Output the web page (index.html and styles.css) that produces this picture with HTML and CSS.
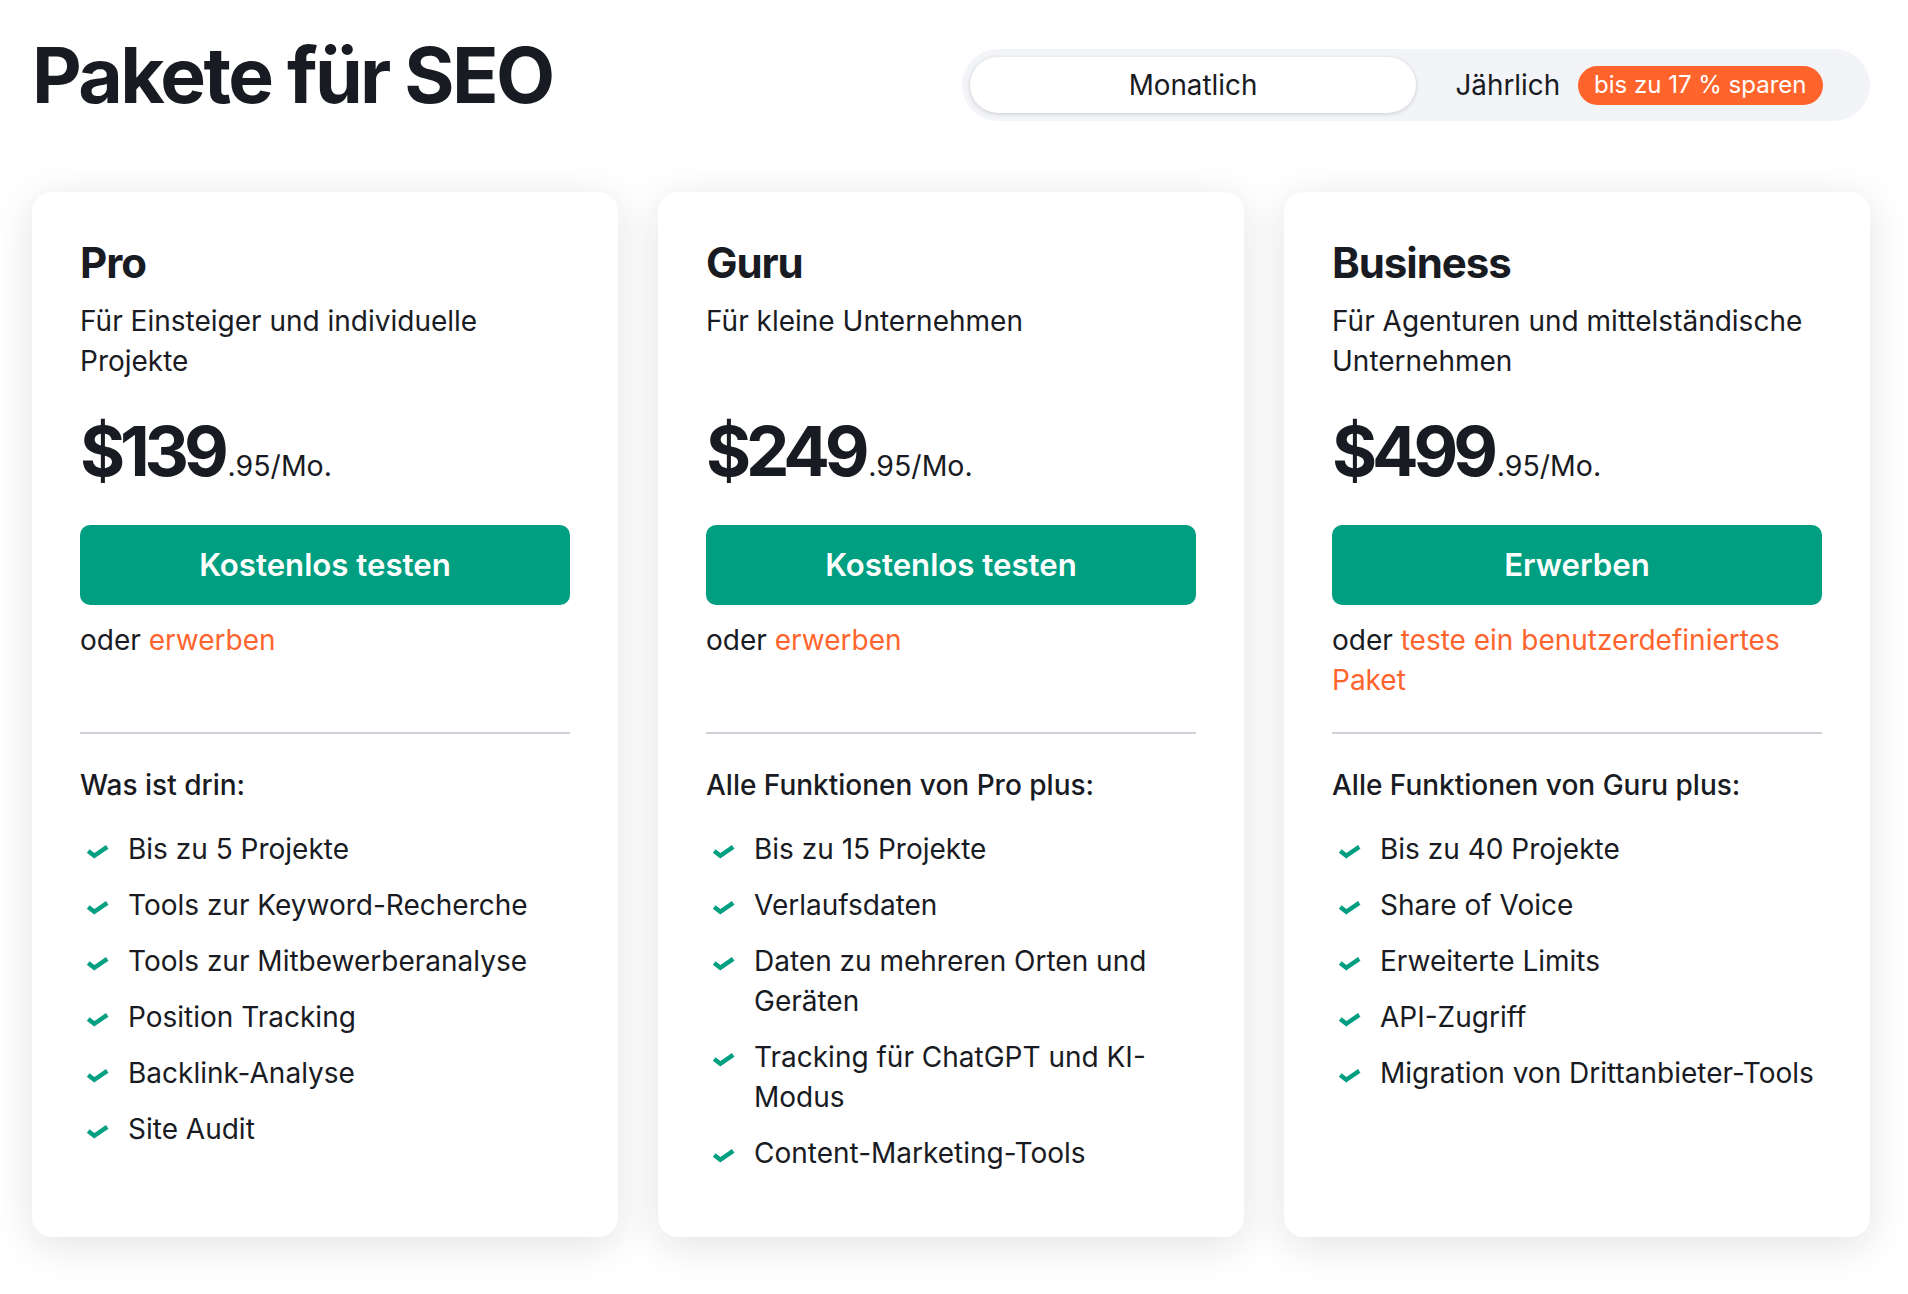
FILE: index.html
```html
<!DOCTYPE html>
<html lang="de">
<head>
<meta charset="utf-8">
<title>Pakete für SEO</title>
<link rel="stylesheet" href="styles.css">
</head>
<body>
<main class="page">
  <header class="header">
    <h1 class="title">Pakete für SEO</h1>
    <div class="toggle">
      <div class="toggle-option is-active">Monatlich</div>
      <div class="toggle-option">Jährlich <span class="badge">bis zu 17 % sparen</span></div>
    </div>
  </header>

  <section class="plans">
    <article class="plan">
      <h2 class="plan-name">Pro</h2>
      <p class="plan-desc">Für Einsteiger und individuelle Projekte</p>
      <div class="price"><span class="price-main">$139</span><span class="price-sub">.95/Mo.</span></div>
      <a class="cta" href="#">Kostenlos testen</a>
      <p class="alt">oder <a href="#">erwerben</a></p>
      <hr class="divider">
      <h3 class="features-title">Was ist drin:</h3>
      <ul class="features">
        <li class="feature"><svg class="feature-icon" viewBox="0 0 33 40"><path d="M8.2 22 L14.3 26.8 L27.2 17.9"/></svg><span>Bis zu 5 Projekte</span></li>
        <li class="feature"><svg class="feature-icon" viewBox="0 0 33 40"><path d="M8.2 22 L14.3 26.8 L27.2 17.9"/></svg><span>Tools zur Keyword-Recherche</span></li>
        <li class="feature"><svg class="feature-icon" viewBox="0 0 33 40"><path d="M8.2 22 L14.3 26.8 L27.2 17.9"/></svg><span>Tools zur Mitbewerberanalyse</span></li>
        <li class="feature"><svg class="feature-icon" viewBox="0 0 33 40"><path d="M8.2 22 L14.3 26.8 L27.2 17.9"/></svg><span>Position Tracking</span></li>
        <li class="feature"><svg class="feature-icon" viewBox="0 0 33 40"><path d="M8.2 22 L14.3 26.8 L27.2 17.9"/></svg><span>Backlink-Analyse</span></li>
        <li class="feature"><svg class="feature-icon" viewBox="0 0 33 40"><path d="M8.2 22 L14.3 26.8 L27.2 17.9"/></svg><span>Site Audit</span></li>
      </ul>
    </article>

    <article class="plan">
      <h2 class="plan-name">Guru</h2>
      <p class="plan-desc">Für kleine Unternehmen</p>
      <div class="price"><span class="price-main">$249</span><span class="price-sub">.95/Mo.</span></div>
      <a class="cta" href="#">Kostenlos testen</a>
      <p class="alt">oder <a href="#">erwerben</a></p>
      <hr class="divider">
      <h3 class="features-title">Alle Funktionen von Pro plus:</h3>
      <ul class="features">
        <li class="feature"><svg class="feature-icon" viewBox="0 0 33 40"><path d="M8.2 22 L14.3 26.8 L27.2 17.9"/></svg><span>Bis zu 15 Projekte</span></li>
        <li class="feature"><svg class="feature-icon" viewBox="0 0 33 40"><path d="M8.2 22 L14.3 26.8 L27.2 17.9"/></svg><span>Verlaufsdaten</span></li>
        <li class="feature"><svg class="feature-icon" viewBox="0 0 33 40"><path d="M8.2 22 L14.3 26.8 L27.2 17.9"/></svg><span>Daten zu mehreren Orten und Geräten</span></li>
        <li class="feature"><svg class="feature-icon" viewBox="0 0 33 40"><path d="M8.2 22 L14.3 26.8 L27.2 17.9"/></svg><span>Tracking für ChatGPT und KI-Modus</span></li>
        <li class="feature"><svg class="feature-icon" viewBox="0 0 33 40"><path d="M8.2 22 L14.3 26.8 L27.2 17.9"/></svg><span>Content-Marketing-Tools</span></li>
      </ul>
    </article>

    <article class="plan">
      <h2 class="plan-name">Business</h2>
      <p class="plan-desc">Für Agenturen und mittelständische Unternehmen</p>
      <div class="price"><span class="price-main">$499</span><span class="price-sub">.95/Mo.</span></div>
      <a class="cta" href="#">Erwerben</a>
      <p class="alt">oder <a href="#">teste ein benutzerdefiniertes Paket</a></p>
      <hr class="divider">
      <h3 class="features-title">Alle Funktionen von Guru plus:</h3>
      <ul class="features">
        <li class="feature"><svg class="feature-icon" viewBox="0 0 33 40"><path d="M8.2 22 L14.3 26.8 L27.2 17.9"/></svg><span>Bis zu 40 Projekte</span></li>
        <li class="feature"><svg class="feature-icon" viewBox="0 0 33 40"><path d="M8.2 22 L14.3 26.8 L27.2 17.9"/></svg><span>Share of Voice</span></li>
        <li class="feature"><svg class="feature-icon" viewBox="0 0 33 40"><path d="M8.2 22 L14.3 26.8 L27.2 17.9"/></svg><span>Erweiterte Limits</span></li>
        <li class="feature"><svg class="feature-icon" viewBox="0 0 33 40"><path d="M8.2 22 L14.3 26.8 L27.2 17.9"/></svg><span>API-Zugriff</span></li>
        <li class="feature"><svg class="feature-icon" viewBox="0 0 33 40"><path d="M8.2 22 L14.3 26.8 L27.2 17.9"/></svg><span>Migration von Drittanbieter-Tools</span></li>
      </ul>
    </article>
  </section>
</main>
</body>
</html>
```

FILE: styles.css
```css
* { box-sizing: border-box; }

body {
  margin: 0;
  background: #ffffff;
  color: #191b23;
  font-family: Inter, "Noto Sans", "Liberation Sans", sans-serif;
  font-size: 28px;
  line-height: 40px;
}

.page {
  width: 1838px;
  margin-left: 32px;
  padding-bottom: 60px;
}

.header {
  display: flex;
  justify-content: space-between;
  align-items: flex-start;
  padding-top: 34px;
}

.title {
  margin: 0;
  font-size: 76.8px;
  line-height: 84px;
  font-weight: 700;
  letter-spacing: -0.034em;
}

.toggle {
  margin-top: 15px;
  display: grid;
  grid-template-columns: 446px 446px;
  padding: 8px;
  background: #f3f4f8;
  border-radius: 36px;
}

.toggle-option {
  height: 56px;
  display: flex;
  align-items: center;
  justify-content: center;
  gap: 18px;
  font-size: 27.8px;
  border-radius: 28px;
}

.toggle-option.is-active {
  background: #ffffff;
  box-shadow: 0 1px 4px rgba(25, 27, 35, 0.18);
}

.badge {
  display: inline-flex;
  align-items: center;
  height: 39px;
  padding: 0 16px;
  border-radius: 20px;
  background: #ff642d;
  color: #ffffff;
  font-size: 24px;
}

.plans {
  margin-top: 71px;
  display: grid;
  grid-template-columns: repeat(3, 1fr);
  gap: 40px;
}

.plan {
  background: #ffffff;
  border-radius: 20px;
  padding: 48px 48px 64px;
  box-shadow: 0 8px 40px rgba(25, 27, 35, 0.12);
}

.plan-name {
  margin: 0;
  font-size: 42px;
  line-height: 46px;
  font-weight: 700;
  letter-spacing: -0.025em;
}

.plan-desc {
  margin: 15px 0 0;
  min-height: 80px;
}

.price {
  margin-top: 30px;
  display: flex;
  align-items: baseline;
  white-space: nowrap;
}

.price-main {
  font-size: 69px;
  line-height: 80px;
  font-weight: 700;
  letter-spacing: -0.075em;
}

.price-sub {
  font-size: 28.5px;
  line-height: 40px;
  margin-left: 4px;
}

.cta {
  margin-top: 34px;
  display: flex;
  height: 80px;
  align-items: center;
  justify-content: center;
  background: #009f81;
  color: #ffffff;
  border-radius: 10px;
  font-size: 31.2px;
  font-weight: 600;
  text-decoration: none;
}

.alt {
  margin: 15px 0 0;
  min-height: 80px;
}

.alt a {
  color: #ff642d;
  text-decoration: none;
}

.divider {
  margin: 32px 0 0;
  border: 0;
  height: 2px;
  background: #cfd2d8;
}

.features-title {
  margin: 31px 0 0;
  font-size: 28px;
  line-height: 40px;
  font-weight: 500;
}

.features {
  list-style: none;
  margin: 24px 0 0;
  padding: 0;
  display: flex;
  flex-direction: column;
  gap: 16px;
}

.feature {
  display: flex;
  gap: 15px;
}

.feature-icon {
  flex: none;
  width: 33px;
  height: 40px;
  fill: none;
  stroke: #009f81;
  stroke-width: 4.4;
}
```
